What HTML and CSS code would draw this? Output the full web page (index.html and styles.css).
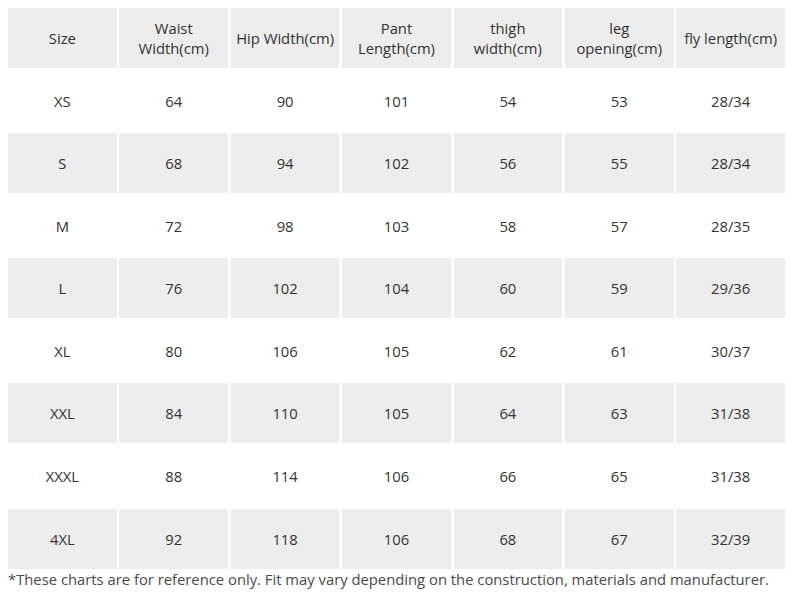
FILE: index.html
```html
<!DOCTYPE html>
<html>
<head>
<meta charset="utf-8">
<link rel="stylesheet" href="styles.css">
</head>
<body>
<div class="chart">
  <div class="cell shade">Size</div>
  <div class="cell shade">Waist Width(cm)</div>
  <div class="cell shade">Hip Width(cm)</div>
  <div class="cell shade">Pant Length(cm)</div>
  <div class="cell shade">thigh width(cm)</div>
  <div class="cell shade">leg opening(cm)</div>
  <div class="cell shade">fly length(cm)</div>

  <div class="cell">XS</div><div class="cell">64</div><div class="cell">90</div><div class="cell">101</div><div class="cell">54</div><div class="cell">53</div><div class="cell">28/34</div>

  <div class="cell shade">S</div><div class="cell shade">68</div><div class="cell shade">94</div><div class="cell shade">102</div><div class="cell shade">56</div><div class="cell shade">55</div><div class="cell shade">28/34</div>

  <div class="cell">M</div><div class="cell">72</div><div class="cell">98</div><div class="cell">103</div><div class="cell">58</div><div class="cell">57</div><div class="cell">28/35</div>

  <div class="cell shade">L</div><div class="cell shade">76</div><div class="cell shade">102</div><div class="cell shade">104</div><div class="cell shade">60</div><div class="cell shade">59</div><div class="cell shade">29/36</div>

  <div class="cell">XL</div><div class="cell">80</div><div class="cell">106</div><div class="cell">105</div><div class="cell">62</div><div class="cell">61</div><div class="cell">30/37</div>

  <div class="cell shade">XXL</div><div class="cell shade">84</div><div class="cell shade">110</div><div class="cell shade">105</div><div class="cell shade">64</div><div class="cell shade">63</div><div class="cell shade">31/38</div>

  <div class="cell">XXXL</div><div class="cell">88</div><div class="cell">114</div><div class="cell">106</div><div class="cell">66</div><div class="cell">65</div><div class="cell">31/38</div>

  <div class="cell shade">4XL</div><div class="cell shade">92</div><div class="cell shade">118</div><div class="cell shade">106</div><div class="cell shade">68</div><div class="cell shade">67</div><div class="cell shade">32/39</div>
</div>
<p class="note">*These charts are for reference only. Fit may vary depending on the construction, materials and manufacturer.</p>
</body>
</html>
```

FILE: styles.css
```css
html, body {
  margin: 0;
  background: #ffffff;
}
body {
  padding: 8px 0 0 8px;
  font-family: "Open Sans", "Liberation Sans", sans-serif;
  color: #333333;
}
.chart {
  width: 777px;
  display: grid;
  grid-template-columns: repeat(7, 1fr);
  grid-template-rows: repeat(9, 59.9px);
  gap: 2.7px;
}
.cell {
  display: flex;
  align-items: center;
  justify-content: center;
  text-align: center;
  font-size: 14.8px;
  line-height: 20px;
  padding: 0 1px;
}
.shade {
  background: #ededed;
}
.note {
  margin: 0;
  font-size: 14.8px;
  line-height: 20px;
  color: #4a4a4a;
}
```
